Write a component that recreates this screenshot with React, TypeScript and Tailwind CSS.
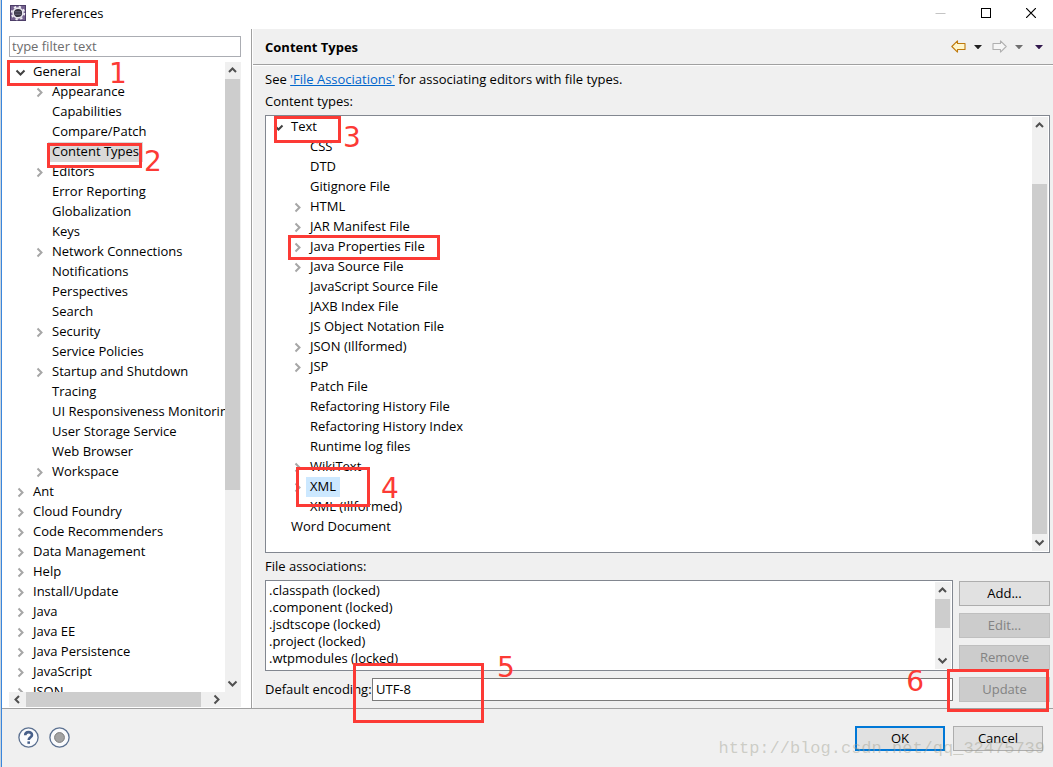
import React from "react";

type Item = { label: string; level: number; arrow?: "open" | "closed"; state?: "grey" | "blue" };

const nav: Item[] = [
  { label: "General", level: 0, arrow: "open" },
  { label: "Appearance", level: 1, arrow: "closed" },
  { label: "Capabilities", level: 1 },
  { label: "Compare/Patch", level: 1 },
  { label: "Content Types", level: 1, state: "grey" },
  { label: "Editors", level: 1, arrow: "closed" },
  { label: "Error Reporting", level: 1 },
  { label: "Globalization", level: 1 },
  { label: "Keys", level: 1 },
  { label: "Network Connections", level: 1, arrow: "closed" },
  { label: "Notifications", level: 1 },
  { label: "Perspectives", level: 1 },
  { label: "Search", level: 1 },
  { label: "Security", level: 1, arrow: "closed" },
  { label: "Service Policies", level: 1 },
  { label: "Startup and Shutdown", level: 1, arrow: "closed" },
  { label: "Tracing", level: 1 },
  { label: "UI Responsiveness Monitoring", level: 1 },
  { label: "User Storage Service", level: 1 },
  { label: "Web Browser", level: 1 },
  { label: "Workspace", level: 1, arrow: "closed" },
  { label: "Ant", level: 0, arrow: "closed" },
  { label: "Cloud Foundry", level: 0, arrow: "closed" },
  { label: "Code Recommenders", level: 0, arrow: "closed" },
  { label: "Data Management", level: 0, arrow: "closed" },
  { label: "Help", level: 0, arrow: "closed" },
  { label: "Install/Update", level: 0, arrow: "closed" },
  { label: "Java", level: 0, arrow: "closed" },
  { label: "Java EE", level: 0, arrow: "closed" },
  { label: "Java Persistence", level: 0, arrow: "closed" },
  { label: "JavaScript", level: 0, arrow: "closed" },
  { label: "JSON", level: 0, arrow: "closed" },
];

const types: Item[] = [
  { label: "Text", level: 0, arrow: "open" },
  { label: "CSS", level: 1 },
  { label: "DTD", level: 1 },
  { label: "Gitignore File", level: 1 },
  { label: "HTML", level: 1, arrow: "closed" },
  { label: "JAR Manifest File", level: 1, arrow: "closed" },
  { label: "Java Properties File", level: 1, arrow: "closed" },
  { label: "Java Source File", level: 1, arrow: "closed" },
  { label: "JavaScript Source File", level: 1 },
  { label: "JAXB Index File", level: 1 },
  { label: "JS Object Notation File", level: 1 },
  { label: "JSON (Illformed)", level: 1, arrow: "closed" },
  { label: "JSP", level: 1, arrow: "closed" },
  { label: "Patch File", level: 1 },
  { label: "Refactoring History File", level: 1 },
  { label: "Refactoring History Index", level: 1 },
  { label: "Runtime log files", level: 1 },
  { label: "WikiText", level: 1, arrow: "closed" },
  { label: "XML", level: 1, arrow: "closed", state: "blue" },
  { label: "XML (Illformed)", level: 1 },
  { label: "Word Document", level: 0 },
];

const associations = [
  ".classpath (locked)",
  ".component (locked)",
  ".jsdtscope (locked)",
  ".project (locked)",
  ".wtpmodules (locked)",
];

function Chevron({ dir, className }: { dir: "up" | "down" | "left" | "right"; className: string }) {
  const d = {
    up: "M2 7 L5.5 3.5 L9 7",
    down: "M1.5 3.5 L5.5 7.5 L9.5 3.5",
    left: "M7 2 L3.5 5.5 L7 9",
    right: "M3.5 1.5 L7.5 5.5 L3.5 9.5",
  }[dir];
  return (
    <svg width="11" height="11" viewBox="0 0 11 11" className={className} aria-hidden="true">
      <path d={d} fill="none" stroke="currentColor" strokeWidth="2" />
    </svg>
  );
}

function Tree({ items, label }: { items: Item[]; label: string }) {
  return (
    <ul role="tree" aria-label={label} className="min-h-0 min-w-0 flex-1 overflow-hidden">
      {items.map((it) => (
        <li
          key={it.label}
          role="treeitem"
          className={`flex h-5 items-center whitespace-nowrap pl-1.5 ${it.level ? "ml-[19px]" : ""}`}
        >
          <span className="flex w-3.5 shrink-0">
            {it.arrow === "open" && <Chevron dir="down" className="text-[#404040]" />}
            {it.arrow === "closed" && <Chevron dir="right" className="text-[#a6a6a6]" />}
          </span>
          <span
            className={`h-5 px-1 leading-[18px] ${
              it.state === "grey" ? "bg-[#d9d9d9]" : it.state === "blue" ? "bg-[#cce8ff]" : ""
            }`}
          >
            {it.label}
          </span>
        </li>
      ))}
    </ul>
  );
}

function VScroll({ thumb }: { thumb: string }) {
  return (
    <div className="flex w-4 shrink-0 flex-col bg-[#f0f0f0] text-[#505050]">
      <div className="flex h-[17px] w-[15px] shrink-0 items-center justify-center">
        <Chevron dir="up" className="" />
      </div>
      <div className="flex min-h-0 w-full flex-1 flex-col">
        <div className={`w-[15px] bg-[#cdcdcd] ${thumb}`} />
      </div>
      <div className="flex h-[17px] w-[15px] shrink-0 items-center justify-center">
        <Chevron dir="down" className="" />
      </div>
    </div>
  );
}

function EclipseIcon() {
  return (
    <svg width="16" height="16" viewBox="0 0 16 16" aria-hidden="true">
      <rect width="16" height="16" fill="#75628f" />
      <rect x="0.5" y="0.5" width="15" height="15" fill="none" stroke="#4c3d68" />
      <circle cx="8" cy="8" r="6.3" fill="none" stroke="#f2f0f5" strokeWidth="1.8" strokeDasharray="2.3 2.65" />
      <circle cx="8" cy="8" r="4.9" fill="#33313d" stroke="#e8e6ee" strokeWidth="1.6" />
      <path d="M4.8 6.5h6.4M4.4 8h7.2M4.8 9.5h6.4" stroke="#6a6880" strokeWidth="0.7" />
    </svg>
  );
}

function Arrow({ dir }: { dir: "back" | "forward" }) {
  const back = dir === "back";
  return (
    <svg width="15" height="13" viewBox="0 0 15 13" aria-hidden="true">
      <path
        d={back ? "M0.8 6.5 L6.5 0.9 V3.5 H14 V9.5 H6.5 V12.1 Z" : "M14.2 6.5 L8.5 0.9 V3.5 H1 V9.5 H8.5 V12.1 Z"}
        fill={back ? "#fff6cc" : "#f6f6f6"}
        stroke={back ? "#bf7a0c" : "#b0b0b0"}
        strokeWidth="1.1"
        strokeLinejoin="round"
      />
    </svg>
  );
}

function Triangle({ className }: { className: string }) {
  return (
    <svg width="8" height="4" viewBox="0 0 8 4" className={className} aria-hidden="true">
      <path d="M0 0h8L4 4.4z" fill="currentColor" />
    </svg>
  );
}

function SideButton({ children, disabled }: { children: React.ReactNode; disabled?: boolean }) {
  return (
    <button
      type="button"
      disabled={disabled}
      className="h-[25px] border border-[#adadad] bg-[#e1e1e1] pb-0.5 text-black disabled:border-[#bfbfbf] disabled:bg-[#cccccc] disabled:text-[#838383]"
    >
      {children}
    </button>
  );
}

function Annotations() {
  const box = "absolute border-3 border-[#fc3a35]";
  const num = "absolute text-[28px] leading-7 font-['DejaVu_Sans',sans-serif]";
  return (
    <div className="pointer-events-none absolute inset-0 z-10 overflow-hidden text-[#fc3a35]">
      <div className={`${box} top-[60px] left-[6px] h-[26px] w-[91px]`} />
      <span className={`${num} top-[60px] left-[108px]`}>1</span>
      <div className={`${box} top-[143px] left-[46px] h-[25px] w-[95px]`} />
      <span className={`${num} top-[148px] left-[143px]`}>2</span>
      <div className={`${box} top-[116px] left-[273px] h-[27px] w-[67px]`} />
      <span className={`${num} top-[124px] left-[342px]`}>3</span>
      <div className={`${box} top-[235px] left-[287px] h-[25px] w-[152px]`} />
      <div className={`${box} top-[467px] left-[295px] h-[40px] w-[74px]`} />
      <span className={`${num} top-[475px] left-[380px]`}>4</span>
      <div className={`${box} bottom-[44px] left-[352px] h-[60px] w-[131px]`} />
      <span className={`${num} bottom-[85px] left-[496px]`}>5</span>
      <div className={`${box} right-[4px] bottom-[55px] h-[43px] w-[102px]`} />
      <span className={`${num} right-[129px] bottom-[71px]`}>6</span>
      <span className="absolute right-[8px] bottom-[8px] font-['Liberation_Mono',monospace] text-[17px] text-[#a0a090]/45">
        http://blog.csdn.net/qq_32475739
      </span>
    </div>
  );
}

export default function App() {
  return (
    <div className="relative flex h-screen flex-col overflow-hidden border-l border-[#c9d3dc] bg-[#f0f0f0] font-['Open_Sans','Noto_Sans',sans-serif] text-[13px] leading-5 text-black">
      <div className="flex min-h-0 flex-1 flex-col border-l border-[#3a86dc]">
        <header className="flex h-[29px] shrink-0 items-center bg-white pb-[3px] pl-2">
          <EclipseIcon />
          <h1 className="ml-[5px] flex-1">Preferences</h1>
          <button type="button" aria-label="Minimize" className="flex w-[46px] justify-center">
            <svg width="11" height="11" viewBox="0 0 11 11"><path d="M0.5 5.5h10" stroke="#c4c4c4" /></svg>
          </button>
          <button type="button" aria-label="Maximize" className="flex w-[46px] justify-center">
            <svg width="10" height="10" viewBox="0 0 10 10"><rect x="0.5" y="0.5" width="9" height="9" fill="none" stroke="#000" /></svg>
          </button>
          <button type="button" aria-label="Close" className="flex w-[44px] justify-center">
            <svg width="10" height="10" viewBox="0 0 10 10"><path d="M0 0L10 10M10 0L0 10" stroke="#000" strokeWidth="1.2" /></svg>
          </button>
        </header>

        <main className="flex min-h-0 flex-1">
          <nav className="flex w-[250px] shrink-0 flex-col border-r border-[#a0a0a0] bg-white pt-[7px] pr-[10px] pb-px pl-[7px]">
            <input
              aria-label="Filter"
              placeholder="type filter text"
              className="h-[21px] w-full shrink-0 border border-[#abadb3] bg-white px-0.5 pb-0.5 placeholder:text-[#6d6d6d]"
            />
            <div className="mt-[5px] flex min-h-0 flex-1">
              <Tree items={nav} label="Preference pages" />
              <VScroll thumb="h-[69%]" />
            </div>
            <div className="flex h-[15px] shrink-0 items-center bg-[#f0f0f0] pr-4 text-[#505050]">
              <div className="flex w-[17px] justify-center"><Chevron dir="left" className="" /></div>
              <div className="flex h-full flex-1"><div className="h-full w-[96%] bg-[#cdcdcd]" /></div>
              <div className="flex w-[17px] justify-center"><Chevron dir="right" className="" /></div>
            </div>
          </nav>

          <section className="flex min-w-0 flex-1 flex-col border-l border-white">
            <div className="flex h-9 shrink-0 items-center border-b border-[#a0a0a0] pr-[10px] pl-3">
              <h2 className="flex-1 font-bold">Content Types</h2>
              <button type="button" aria-label="Back"><Arrow dir="back" /></button>
              <button type="button" aria-label="Back history" className="ml-2"><Triangle className="text-[#202020]" /></button>
              <button type="button" aria-label="Forward" className="ml-[10px]"><Arrow dir="forward" /></button>
              <button type="button" aria-label="Forward history" className="ml-2"><Triangle className="text-[#707070]" /></button>
              <button type="button" aria-label="Menu" className="ml-3"><Triangle className="text-[#31174d]" /></button>
            </div>
            <div className="flex min-h-0 flex-1 flex-col border-t border-white pr-[3px] pb-[6px] pl-3">
              <p className="mt-[3px]">
                See <a href="#file-associations" className="text-[#0066cc] underline">'File Associations'</a> for associating editors with file types.
              </p>
              <p className="mt-0.5">Content types:</p>
              <div className="mt-1 flex min-h-0 flex-1 border border-[#828790] bg-white p-px">
                <Tree items={types} label="Content types" />
                <VScroll thumb="mt-[50px] flex-1" />
              </div>
              <p className="mt-[3px]">File associations:</p>
              <div id="file-associations" className="mt-1 flex shrink-0 gap-1.5">
                <div className="flex min-w-0 flex-1 flex-col gap-[7px]">
                  <div className="flex h-[91px] border border-[#828790] bg-white p-px">
                    <ul className="flex-1 overflow-hidden pl-0.5 leading-[17px]">
                      {associations.map((a) => (
                        <li key={a}>{a}</li>
                      ))}
                    </ul>
                    <VScroll thumb="h-[29px]" />
                  </div>
                  <div className="flex items-center">
                    <label htmlFor="encoding" className="w-[107px] shrink-0 pb-0.5 whitespace-nowrap">Default encoding:</label>
                    <input
                      id="encoding"
                      defaultValue="UTF-8"
                      className="h-[23px] min-w-0 flex-1 border border-[#7a7a7a] bg-white px-[3px] pb-0.5"
                    />
                  </div>
                </div>
                <div className="mt-px flex w-[91px] shrink-0 flex-col gap-[7px]">
                  <SideButton>Add...</SideButton>
                  <SideButton disabled>Edit...</SideButton>
                  <SideButton disabled>Remove</SideButton>
                  <SideButton disabled>Update</SideButton>
                </div>
              </div>
            </div>
          </section>
        </main>

        <footer className="flex h-[59px] shrink-0 items-center border-t border-[#a0a0a0] pr-[10px] pb-0.5 pl-4">
          <button type="button" aria-label="Help">
            <svg width="21" height="21" viewBox="0 0 21 21">
              <circle cx="10.5" cy="10.5" r="9.6" fill="#fafbfd" stroke="#5b7090" strokeWidth="1.3" />
              <path d="M7.2 8.2C7.2 4.2 14 4.2 14 7.9C14 10.2 10.7 10.2 10.7 13" fill="none" stroke="#48608a" strokeWidth="2.6" />
              <rect x="9.4" y="14.4" width="2.6" height="2.4" fill="#48608a" />
            </svg>
          </button>
          <button type="button" aria-label="Record" className="ml-[10px]">
            <svg width="21" height="21" viewBox="0 0 21 21">
              <circle cx="10.5" cy="10.5" r="9.6" fill="#fafbfd" stroke="#5b7090" strokeWidth="1.3" />
              <circle cx="10.5" cy="10.5" r="4.9" fill="#a3a3a3" stroke="#7c7c7c" />
            </svg>
          </button>
          <div className="mt-0.5 ml-auto flex gap-2">
            <button type="button" className="h-[25px] w-[90px] border-2 border-[#0078d7] bg-[#e1e1e1] leading-5">OK</button>
            <button type="button" className="h-[25px] w-[90px] border border-[#adadad] bg-[#e1e1e1] leading-5">Cancel</button>
          </div>
        </footer>
      </div>
      <Annotations />
    </div>
  );
}
